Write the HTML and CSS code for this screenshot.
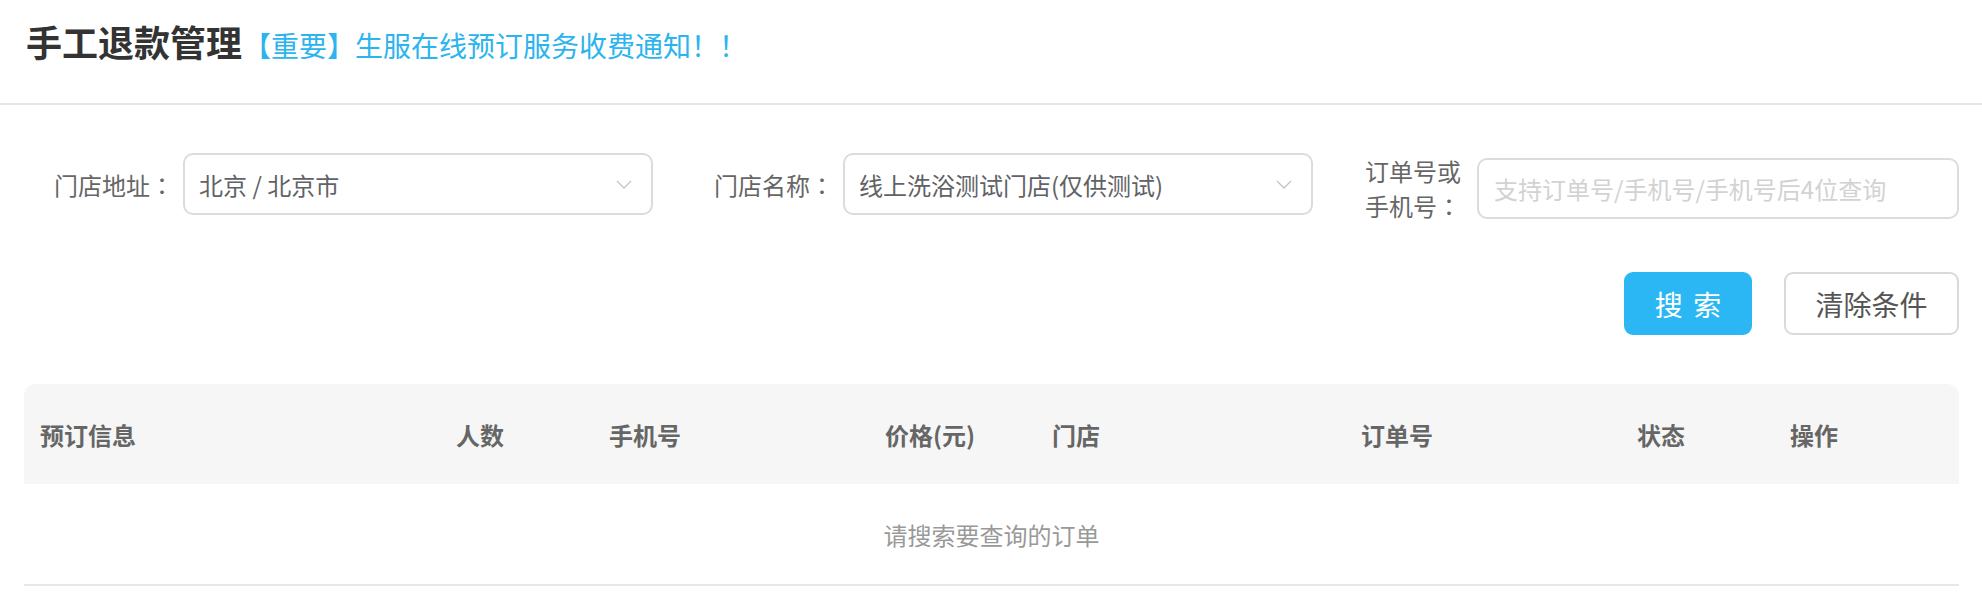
FILE: index.html
```html
<!DOCTYPE html>
<html>
<head>
  <meta charset="UTF-8">
  <title>手工退款管理</title>
  <link rel="stylesheet" href="styles.css">
</head>
<body>
  <div class="header">
    <span class="title">手工退款管理</span>
    <a class="notice" href="#">【重要】生服在线预订服务收费通知！！</a>
  </div>

  <div class="filters">
    <div class="field">
      <label class="field-label">门店地址<span class="colon">：</span></label>
      <div class="select">
        <span>北京&nbsp;/&nbsp;北京市</span>
        <svg class="arrow" width="16" height="9" viewBox="0 0 16 9"><polyline points="1,1 8,8 15,1" fill="none" stroke="#c0c4cc" stroke-width="1.3"/></svg>
      </div>
    </div>
    <div class="field field-store">
      <label class="field-label">门店名称<span class="colon">：</span></label>
      <div class="select">
        <span>线上洗浴测试门店(仅供测试)</span>
        <svg class="arrow" width="16" height="9" viewBox="0 0 16 9"><polyline points="1,1 8,8 15,1" fill="none" stroke="#c0c4cc" stroke-width="1.3"/></svg>
      </div>
    </div>
    <div class="field field-order">
      <label class="field-label label-wrap" for="order">订单号或<br>手机号<span class="colon">：</span></label>
      <input type="text" id="order" class="text-input" placeholder="支持订单号/手机号/手机号后4位查询">
    </div>
  </div>

  <div class="actions">
    <button class="btn btn-primary">搜 索</button>
    <button class="btn btn-plain">清除条件</button>
  </div>

  <div class="table-wrap">
    <table class="orders">
      <colgroup>
        <col style="width:416px">
        <col style="width:153px">
        <col style="width:276px">
        <col style="width:167px">
        <col style="width:309px">
        <col style="width:276px">
        <col style="width:153px">
        <col>
      </colgroup>
      <thead>
        <tr>
          <th>预订信息</th>
          <th>人数</th>
          <th>手机号</th>
          <th>价格(元)</th>
          <th>门店</th>
          <th>订单号</th>
          <th>状态</th>
          <th>操作</th>
        </tr>
      </thead>
      <tbody>
        <tr>
          <td class="empty" colspan="8">请搜索要查询的订单</td>
        </tr>
      </tbody>
    </table>
  </div>
</body>
</html>
```

FILE: styles.css
```css
body{
  margin:0;
  background:#fff;
  font-family:"Noto Sans CJK SC", "Noto Sans", sans-serif;
  color:#606266;
}
.header{
  height:105px;
  border-bottom:2px solid #e6e6e6;
  padding:17px 0 0 26px;
  box-sizing:border-box;
  display:flex;
  align-items:baseline;
}
.title{
  font-size:36px;
  font-weight:bold;
  color:#333;
  line-height:48px;
}
.notice{
  font-size:28px;
  color:#2bb4ee;
  text-decoration:none;
  margin-left:1px;
}

.filters{
  display:flex;
  align-items:flex-start;
  padding:48px 23px 0 24px;
}
.field{
  display:flex;
  align-items:center;
}
.field-label{
  width:150px;
  margin-right:9px;
  text-align:right;
  font-size:24px;
  color:#666;
}
.colon{
  font-family:"Noto Sans CJK JP", sans-serif;
}
.field-store{
  margin-left:31px;
}
.field-order{
  margin-left:auto;
}
.label-wrap{
  width:100px;
  margin-right:16px;
  line-height:35px;
}
.select{
  width:470px;
  height:62px;
  box-sizing:border-box;
  border:2px solid #dcdcdc;
  border-radius:10px;
  display:flex;
  align-items:center;
  justify-content:space-between;
  padding:0 19px 0 14px;
  font-size:24px;
  color:#606266;
}
.arrow{
  display:block;
}
.text-input{
  width:482px;
  height:61px;
  box-sizing:border-box;
  border:2px solid #dcdcdc;
  border-radius:10px;
  padding:0 15px;
  font-family:inherit;
  font-size:24px;
  color:#606266;
  outline:none;
}
.text-input::placeholder{
  color:#d2d2d2;
}

.actions{
  display:flex;
  justify-content:flex-end;
  gap:32px;
  padding:49px 23px 0 0;
}
.btn{
  height:63px;
  border-radius:9px;
  font-family:inherit;
  font-size:28px;
  cursor:pointer;
}
.btn-primary{
  width:128px;
  background:#2bb7f3;
  border:none;
  color:#fff;
  word-spacing:4px;
}
.btn-plain{
  width:175px;
  background:#fff;
  border:2px solid #d9d9d9;
  color:#555;
}

.table-wrap{
  padding:49px 23px 0 24px;
}
.orders{
  width:100%;
  table-layout:fixed;
  border-collapse:separate;
  border-spacing:0;
}
.orders th{
  height:100px;
  background:#f6f6f6;
  text-align:left;
  padding:0 0 0 16px;
  font-size:24px;
  font-weight:bold;
  color:#666;
}
.orders th:first-child{
  border-top-left-radius:12px;
}
.orders th:last-child{
  border-top-right-radius:12px;
}
.orders td.empty{
  height:98px;
  text-align:center;
  font-size:24px;
  color:#999;
  border-bottom:2px solid #e8e8e8;
}
```
